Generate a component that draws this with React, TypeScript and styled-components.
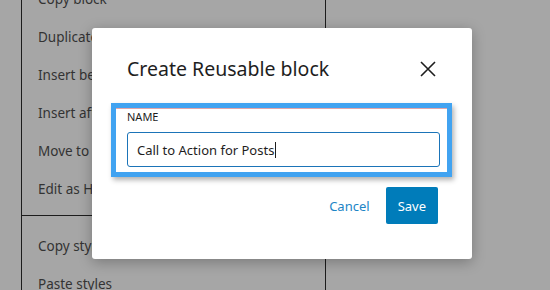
import React from "react";
import styled, { createGlobalStyle } from "styled-components";

const Global = createGlobalStyle`
  html, body { margin: 0; padding: 0; }
  body { font-family: "Noto Sans", "DejaVu Sans", sans-serif; }
  * { box-sizing: border-box; }
`;

const Page = styled.div`
  position: relative;
  width: 550px;
  height: 290px;
  overflow: hidden;
  background: #a6a6a6;
  padding-left: 21px;
`;

const Menu = styled.div`
  width: 305px;
  height: 330px;
  margin-top: -20px;
  border-left: 1px solid #1c1c1c;
  border-right: 1px solid #1c1c1c;
  display: flex;
  flex-direction: column;
`;

const Group = styled.div<{ $top?: number; $bottom?: number }>`
  display: flex;
  flex-direction: column;
  padding-top: ${(p) => p.$top ?? 0}px;
  padding-bottom: ${(p) => p.$bottom ?? 0}px;
`;

const Divider = styled.div`
  height: 1px;
  background: #1c1c1c;
`;

const Item = styled.div`
  height: 38px;
  display: flex;
  align-items: center;
  padding-left: 16px;
  font-size: 13.5px;
  color: #333333;
`;

const Modal = styled.div`
  position: absolute;
  left: 92px;
  top: 28px;
  width: 380px;
  height: 231px;
  background: #ffffff;
  border-radius: 3px;
  box-shadow: 0 3px 14px rgba(0, 0, 0, 0.28);
  display: flex;
  flex-direction: column;
  padding-top: 28px;
`;

const Header = styled.div`
  height: 26px;
  display: flex;
  align-items: center;
  justify-content: space-between;
  padding: 0 36px 0 35px;
`;

const Title = styled.h1`
  margin: 0;
  font-size: 19.5px;
  font-weight: 400;
  color: #1e1e1e;
  line-height: 26px;
`;

const Close = styled.button`
  border: 0;
  background: none;
  padding: 0;
  width: 16px;
  height: 16px;
  display: flex;
  color: #1e1e1e;
`;

const Highlight = styled.div`
  margin: 21px 20px 0 19px;
  height: 74px;
  border: 5px solid #41a3f1;
  box-shadow: 2px 3px 5px rgba(0, 0, 0, 0.3);
  display: flex;
  flex-direction: column;
`;

const Field = styled.div`
  flex: 1;
  border-top: 1px solid #e2a5a8;
  padding: 1px 7px 0 11px;
  display: flex;
  flex-direction: column;
`;

const Label = styled.label`
  font-size: 11px;
  line-height: 14px;
  color: #1e1e1e;
  text-transform: uppercase;
`;

const Input = styled.div`
  margin-top: 8px;
  height: 35px;
  border: 1.5px solid #1b74b8;
  border-radius: 3px;
  display: flex;
  align-items: center;
  padding-left: 9px;
  font-size: 13px;
  color: #1e1e1e;
`;

const Caret = styled.span`
  display: inline-block;
  width: 1px;
  height: 16px;
  background: #1e1e1e;
  margin-left: 1px;
`;

const Footer = styled.div`
  display: flex;
  justify-content: flex-end;
  align-items: center;
  gap: 16px;
  margin-top: 10px;
  padding-right: 34px;
`;

const Button = styled.button<{ $primary?: boolean }>`
  font-family: inherit;
  font-size: 13px;
  border: 0;
  border-radius: 2px;
  height: 37px;
  cursor: pointer;
  padding: ${(p) => (p.$primary ? "0 12px" : "0")};
  background: ${(p) => (p.$primary ? "#007cba" : "transparent")};
  color: ${(p) => (p.$primary ? "#ffffff" : "#1d85c6")};
`;

const topItems = ["Copy block", "Duplicate", "Insert before", "Insert after", "Move to", "Edit as HTML"];
const bottomItems = ["Copy styles", "Paste styles"];

export default function App() {
  return (
    <Page>
      <Global />
      <Menu>
        <Group $bottom={7}>
          {topItems.map((t) => (
            <Item key={t}>{t}</Item>
          ))}
        </Group>
        <Divider />
        <Group $top={11}>
          {bottomItems.map((t) => (
            <Item key={t}>{t}</Item>
          ))}
        </Group>
      </Menu>
      <Modal>
        <Header>
          <Title>Create Reusable block</Title>
          <Close aria-label="Close">
            <svg width="16" height="16" viewBox="0 0 16 16" fill="none" stroke="currentColor" strokeWidth="1.6">
              <path d="M1 1 L15 15 M15 1 L1 15" />
            </svg>
          </Close>
        </Header>
        <Highlight>
          <Field>
            <Label>Name</Label>
            <Input>
              Call to Action for Posts
              <Caret />
            </Input>
          </Field>
        </Highlight>
        <Footer>
          <Button>Cancel</Button>
          <Button $primary>Save</Button>
        </Footer>
      </Modal>
    </Page>
  );
}
